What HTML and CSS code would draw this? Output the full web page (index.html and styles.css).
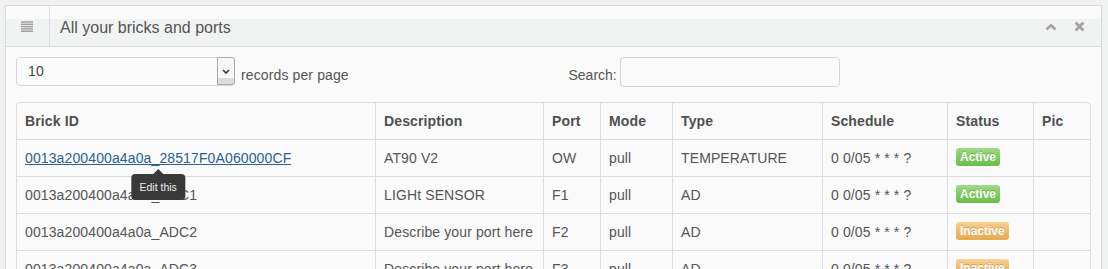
FILE: index.html
```html
<!DOCTYPE html>
<html lang="en">
<head>
<meta charset="utf-8">
<title>All your bricks and ports</title>
<link rel="stylesheet" href="styles.css">
</head>
<body>
<div class="page">
  <div class="widget">
    <div class="widget-header">
      <span class="widget-icon">
        <svg width="12" height="11" viewBox="0 0 12 11" aria-hidden="true">
          <rect x="0" y="0.3" width="12" height="1.4" fill="#9a9a9a"/>
          <rect x="0" y="2.6" width="12" height="1.4" fill="#9a9a9a"/>
          <rect x="0" y="4.9" width="12" height="1.4" fill="#9a9a9a"/>
          <rect x="0" y="7.2" width="12" height="1.4" fill="#9a9a9a"/>
          <rect x="0" y="9.5" width="12" height="1.4" fill="#9a9a9a"/>
        </svg>
      </span>
      <h4 class="widget-title">All your bricks and ports</h4>
      <div class="widget-toolbar">
        <span class="tool tool-collapse">
          <svg width="12" height="8" viewBox="0 0 12 8" aria-hidden="true">
            <polyline points="1.5,6.5 6,2.2 10.5,6.5" fill="none" stroke="#a3a3a3" stroke-width="2.6"/>
          </svg>
        </span>
        <span class="tool tool-close">
          <svg width="11" height="11" viewBox="0 0 11 11" aria-hidden="true">
            <path d="M1.6 1.6 L9.4 9.4 M9.4 1.6 L1.6 9.4" fill="none" stroke="#a3a3a3" stroke-width="2.8"/>
          </svg>
        </span>
      </div>
    </div>
    <div class="widget-body">
      <div class="controls">
        <div class="length">
          <div class="select">
            <span class="select-value">10</span>
            <span class="select-arrow">
              <svg width="8" height="5" viewBox="0 0 8 5" aria-hidden="true">
                <polyline points="1,1 4,4 7,1" fill="none" stroke="#333" stroke-width="1.6"/>
              </svg>
            </span>
          </div>
          <span class="control-label">records per page</span>
        </div>
        <div class="filter">
          <span class="control-label">Search:</span>
          <span class="search-input"></span>
        </div>
      </div>
      <table class="bricks">
        <colgroup>
          <col class="c-id"><col class="c-desc"><col class="c-port"><col class="c-mode"><col class="c-type"><col class="c-sched"><col class="c-status"><col class="c-pic">
        </colgroup>
        <thead>
          <tr><th>Brick ID</th><th>Description</th><th>Port</th><th>Mode</th><th>Type</th><th>Schedule</th><th>Status</th><th>Pic</th></tr>
        </thead>
        <tbody>
          <tr>
            <td><span class="link-wrap"><a class="brick-link" href="#">0013a200400a4a0a_28517F0A060000CF</a><span class="tooltip">Edit this</span></span></td>
            <td>AT90 V2</td><td>OW</td><td>pull</td><td>TEMPERATURE</td><td>0 0/05 * * * ?</td><td><span class="badge badge-active">Active</span></td><td></td>
          </tr>
          <tr>
            <td>0013a200400a4a0a_ADC1</td><td>LIGHt SENSOR</td><td>F1</td><td>pull</td><td>AD</td><td>0 0/05 * * * ?</td><td><span class="badge badge-active">Active</span></td><td></td>
          </tr>
          <tr>
            <td>0013a200400a4a0a_ADC2</td><td>Describe your port here</td><td>F2</td><td>pull</td><td>AD</td><td>0 0/05 * * * ?</td><td><span class="badge badge-inactive">Inactive</span></td><td></td>
          </tr>
          <tr>
            <td>0013a200400a4a0a_ADC3</td><td>Describe your port here</td><td>F3</td><td>pull</td><td>AD</td><td>0 0/05 * * * ?</td><td><span class="badge badge-inactive">Inactive</span></td><td></td>
          </tr>
        </tbody>
      </table>
    </div>
  </div>
</div>
</body>
</html>
```
FILE: styles.css
```css
* { box-sizing: border-box; }
html, body {
  margin: 0;
  padding: 0;
  height: 100%;
  overflow: hidden;
  background: #eff1f0;
  font-family: "Liberation Sans", Arial, sans-serif;
  font-size: 14px;
  color: #555;
}
.page {
  padding: 5px 6px 0 5px;
}
.widget {
  width: 1097px;
  border: 1px solid #d9d9d9;
  background: #fafafa;
}
.widget-header {
  display: flex;
  align-items: stretch;
  height: 41px;
  border-bottom: 1px solid #dcdcdc;
  background: linear-gradient(to bottom, #fafafa 0, #fafafa 13px, #f1f3f2 13px, #f1f3f2 100%);
}
.widget-icon {
  width: 44px;
  border-right: 1px solid #dcdcdc;
  display: flex;
  align-items: flex-start;
  justify-content: center;
  padding-top: 15px;
  padding-right: 1px;
}
.widget-icon svg { display: block; }
.widget-title {
  margin: 0;
  padding: 12px 0 0 10px;
  font-size: 16px;
  line-height: 20px;
  font-weight: normal;
  color: #555;
  flex: 1;
}
.widget-toolbar {
  display: flex;
  align-items: flex-start;
  padding-right: 16px;
}
.tool { display: block; }
.tool svg { display: block; }
.tool-collapse { padding-top: 17px; }
.tool-close { padding-top: 15px; margin-left: 17px; }

.widget-body {
  padding: 10px 10px 0 10px;
  letter-spacing: 0.12px;
}
.controls {
  display: grid;
  grid-template-columns: 1fr 1fr;
  height: 30px;
  margin-bottom: 15px;
}
.length, .filter {
  display: flex;
  align-items: flex-start;
}
.filter { padding-left: 15px; }
.control-label {
  margin-top: 8px;
  line-height: 20px;
  color: #555;
}
.select {
  display: flex;
  width: 219px;
  height: 29px;
  border: 1px solid #d5d5d5;
  border-radius: 4px;
  background: #fbfbfb;
  margin-right: 6px;
}
.select-value {
  flex: 1;
  padding: 3px 0 0 11px;
  line-height: 20px;
  color: #444;
}
.select-arrow {
  width: 18px;
  margin: -1px -1px 0 0;
  height: 28px;
  border: 1px solid #a9a9a9;
  border-radius: 0 3px 3px 0;
  background: linear-gradient(to bottom, #f7f7f7 0, #f7f7f7 75%, #dcdcdc 75%, #dcdcdc 100%);
  display: flex;
  justify-content: center;
  padding-top: 11px;
}
.select-arrow svg { display: block; }
.filter .control-label { margin-right: 3px; letter-spacing: 0; }
.search-input {
  display: block;
  width: 220px;
  height: 30px;
  border: 1px solid #d5d5d5;
  border-radius: 4px;
  background: #fafafa;
}

.bricks {
  width: 1075px;
  table-layout: fixed;
  border-collapse: separate;
  border-spacing: 0;
  border: 1px solid #dcdcdc;
  border-radius: 4px 4px 0 0;
}
.c-id { width: 358px; }
.c-desc { width: 168px; }
.c-port { width: 57px; }
.c-mode { width: 72px; }
.c-type { width: 150px; }
.c-sched { width: 125px; }
.c-status { width: 86px; }
.c-pic { width: 57px; }
.bricks th, .bricks td {
  padding: 8px 8px;
  line-height: 20px;
  text-align: left;
  vertical-align: top;
  white-space: nowrap;
  border-left: 1px solid #dcdcdc;
  height: 36px;
}
.bricks th:first-child, .bricks td:first-child { border-left: 0; }
.bricks td { border-top: 1px solid #dcdcdc; }
.bricks th {
  font-weight: bold;
  color: #4f4f4f;
}
.link-wrap {
  position: relative;
  display: inline-block;
  vertical-align: top;
}
.brick-link {
  color: #2d5f94;
  text-decoration: underline;
}
.tooltip {
  position: absolute;
  z-index: 5;
  top: calc(100% + 6px);
  left: 50%;
  transform: translateX(-50%);
  height: 26px;
  padding: 0 8px;
  line-height: 26px;
  font-size: 10.5px;
  letter-spacing: 0;
  color: #eee;
  background: #393939;
  border-radius: 4px;
  white-space: nowrap;
}
.tooltip::before {
  content: "";
  position: absolute;
  top: -5px;
  left: 50%;
  margin-left: -5px;
  border-style: solid;
  border-width: 0 5px 5px 5px;
  border-color: transparent transparent #393939 transparent;
}
.badge {
  display: inline-block;
  vertical-align: top;
  height: 18px;
  line-height: 18px;
  padding: 0 4px;
  font-size: 12px;
  font-weight: bold;
  letter-spacing: 0;
  color: #fff;
  border-radius: 3px;
  text-shadow: 0 -1px 0 rgba(0, 0, 0, 0.2);
}
.badge-active {
  background: linear-gradient(to bottom, #a4da8c 0%, #82cc62 45%, #6cbd4c 100%);
}
.badge-inactive {
  background: linear-gradient(to bottom, #f9d197 0%, #efbc6c 45%, #e5aa52 100%);
}
```
